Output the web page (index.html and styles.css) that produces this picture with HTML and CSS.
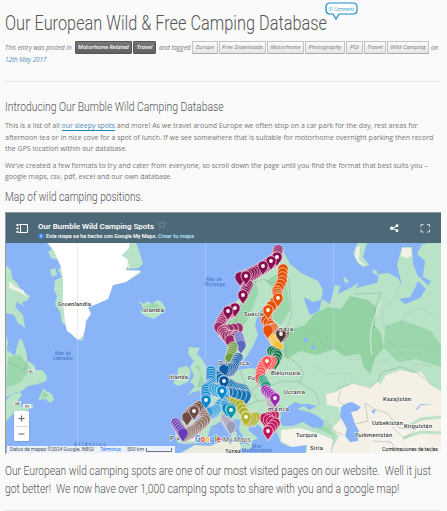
FILE: index.html
```
<!DOCTYPE html>
<html lang="en">
<head>
<meta charset="utf-8">
<title>Our European Wild &amp; Free Camping Database</title>
<link rel="stylesheet" href="styles.css">
</head>
<body>
<article class="entry">
  <header class="entry-header">
    <h1 class="title"><span>Our European Wild &amp; Free Camping Database</span></h1>
    <a class="comments"><svg width="33" height="20" viewBox="0 0 33 20"><path d="M5 1H28Q32 1 32 5V8Q32 12 28 12H14L11 17L8 12H5Q1 12 1 8V5Q1 1 5 1Z" fill="#fff" stroke="#138bc8" stroke-width="1.2"/><text x="4" y="8.6" textLength="25" lengthAdjust="spacingAndGlyphs">51 Comments</text></svg></a>
    <div class="meta">
      <span class="words posted">This entry was posted in</span>
      <a class="tag dark w57">Motorhome Related</a><a class="tag dark w23">Travel</a>
      <span class="words tagged">and tagged</span>
      <a class="tag w26">Europe</a><a class="tag w47">Free Downloads</a><a class="tag w37">Motorhome</a><a class="tag w40">Photography</a><a class="tag w17">POI</a><a class="tag w22">Travel</a><a class="tag w42">Wild Camping</a>
      <span class="words on">on</span>
    </div>
    <div class="date">12th May 2017</div>
  </header>
  <h2 class="sub intro"><span>Introducing Our Bumble Wild Camping Database</span></h2>
  <p class="copy">
    <span class="l1">This is a list of all <a>our sleepy spots</a> and more! As we travel around Europe we often stop on a car park for the day, rest areas for</span>
    <span class="l2">afternoon tea or in nice cove for a spot of lunch. If we see somewhere that is suitable for motorhome overnight parking then record</span>
    <span class="l3">the GPS location within our database.</span>
  </p>
  <p class="copy">
    <span class="l4">We’ve created a few formats to try and cater from everyone, so scroll down the page until you find the format that best suits you –</span>
    <span class="l5">google maps, csv, pdf, excel and our own database.</span>
  </p>
  <h2 class="sub maphead"><span>Map of wild camping positions.</span></h2>
  <svg class="map" viewBox="5 212 436 242" width="436" height="242">
    <defs><clipPath id="frame"><rect x="6" y="243" width="435" height="210"/></clipPath></defs>
    <g clip-path="url(#frame)">
      <rect x="5" y="243" width="436" height="211" fill="#8ab4f8"/>
      <g class="land">
        <path d="M6 265L11 270L12 278L17 283L21 290L30 296L27 301L22 302L24 306L17 302L15 307L23 315L25 328L18 323L14 315L6 313Z"/>
        <path d="M6 335L8 342L7 350L15 356L17 346L20 338L23 342L26 352L28 361L34 365L36 370L42 370L47 376L46 381L38 384L28 386L22 391L14 393L6 397Z"/>
        <path d="M45 383L43 388L46 391L52 394L54 400L50 403L46 399L38 400L41 394ZM6 400L12 394L20 392L22 395L17 401L23 408L32 404L34 407L23 412L14 413L6 421Z"/>
        <path d="M47 243L52 249L48 252L51 258L58 260L61 267L58 270L62 277L55 280L54 290L57 296L55 304L60 312L62 323L66 325L64 243ZM50 270L55 268L57 275L52 277ZM67 330L75 338L82 341L84 336L82 329Z"/>
        <path d="M131 243L126 251L122 253L127 261L123 268L130 269L138 268L143 264L139 250L136 243ZM95 302L104 294L113 285L126 282L141 273L139 270L125 272L110 288L97 299Z"/>
        <path d="M138 301L144 304L147 301L152 304L157 300L162 302L166 309L160 315L154 319L145 316L140 312L144 308Z"/>
        <path d="M189 347L200 348L197 354L202 359L207 368L211 377L210 384L204 390L193 392L187 396L195 386L190 382L194 376L190 367L194 361L188 354ZM178 368L187 366L191 371L188 382L178 386L173 383L177 377Z"/>
        <path d="M219 337L215 328L221 312L239 299L244 286L257 268L273 253L282 249L290 264L303 274L318 281L323 290L321 300L313 302L304 297L306 305L310 315L319 311L322 299L330 304L335 285L340 286L338 294L352 287L359 282L356 288L377 283L379 274L388 273L398 278L402 286L397 265L402 247L412 247L413 264L418 276L428 285L426 289L418 281L416 286L410 297L399 299L405 304L420 298L431 281L423 277L425 261L417 254L422 244H441V454H350L305 454L307 444L299 444L290 447L281 443L275 428L266 436L260 426L250 421L244 415L239 420L230 418L220 422L211 427L207 437L199 443L186 444L178 443L175 436L178 421L196 420L203 420L203 411L194 403L205 399L213 395L220 390L226 381L230 369L235 363L238 370L249 368L259 369L264 365L269 357L272 342L286 333L281 333L267 337L263 328L264 315L268 306L264 306L258 315L255 325L258 335L253 346L247 356L241 364L238 360L235 343L228 345Z"/>
        <path d="M240 421L246 423L249 431L258 438L252 441L252 447L245 440L239 430ZM240 444L252 445L248 451L240 448ZM232 431L237 432L236 440L231 440ZM345 277A3 3 0 1 0 349 282Z"/>
        <path d="M358 243L353 253L357 262L363 267L369 265L363 257L367 243ZM372 269L377 271L378 276L373 273ZM427 243L426 250L429 262L438 278L441 274V243Z"/>
        <path d="M179 454L195 445L211 446L222 441L239 442L241 447L239 454Z" fill="#e8eddc"/>
      </g>
      <g fill="#92d2a3">
        <path d="M314 314L328 307L341 309L350 296L368 300L376 307L374 325L380 332L384 348L375 358L370 374L364 367L360 354L344 356L334 349L317 355L300 351L287 359L279 347L287 330L304 326Z"/>
        <path d="M266 281L279 273L286 279L290 310L281 325L272 318L278 294ZM248 292L256 280L258 294L247 321L236 335L226 340L225 323L239 306ZM385 326L402 320L431 331L441 345V367L416 359L398 362L384 348Z" opacity=".75"/>
        <path d="M8 357L20 355L31 369L21 382L6 388ZM43 391L49 395L42 399ZM195 366L201 373L197 388L205 386L199 366ZM217 411L234 402L249 407L239 414L222 419ZM270 402L288 408L281 415L268 412ZM309 420L329 429L338 437L330 434L316 428ZM403 422L424 416L441 419L416 429L404 431ZM143 307L156 303L163 309L153 313Z" opacity=".75"/>
      </g>
      <path d="M340 389L353 383L371 387L378 381L380 385L386 375L401 370L414 373L421 372L432 386L441 391V454H329L338 438L330 430L341 419L339 407L327 405L326 394L336 392Z" fill="#f4f0e6"/>
      <path d="M281 430L299 428L320 434L334 440L331 454H307L307 445L292 447L281 441ZM371 419L388 417L400 428L423 428L425 444L409 454H369Z" fill="#f6f3ec"/>
      <path d="M405 428L421 419L441 417M403 438L421 432L441 433M325 424L338 437" fill="none" stroke="#a9dcb8" stroke-width="3" opacity=".75"/>
      <path d="M297 409L304 406L309 410L317 406L309 404L300 404L295 402L282 411L280 421L283 426L293 426L303 422L313 428L323 427L324 421L316 415L309 412ZM347 403L352 402L361 407L357 411L351 412L355 424L359 431L358 441L350 442L345 436L347 429L340 416L341 407ZM416 409L421 404L433 404L421 405L417 410ZM371 411L376 409L374 414ZM312 345L315 346L316 350L311 348ZM304 338H308L307 343L304 342Z" fill="#8ab4f8"/>
      <g fill="#f4f0e6"><path d="M402 248L411 248L412 256L406 258L401 256ZM356 247L360 246L359 260L366 266L360 264L355 257ZM9 281L16 287L23 290L27 297L19 292L9 288ZM180 431L188 426L201 429L195 441L182 441ZM123 259L126 260L130 267L124 267Z"/></g>
      <path d="M48 243L54 251L57 258L61 267L63 280L63 303L65 322L67 331L73 335L78 340L83 336L85 330L86 321L91 314L88 307L97 304L108 299L113 285L126 282L141 271L126 270L128 260L122 255L129 248L130 243Z" fill="#fff"/>
      <g class="borders">
        <path d="M249 282L256 282L264 279L270 283L277 282L283 275L289 279L290 298L292 315L286 330M250 283L247 297L239 309L235 325L236 340M282 335L287 347L285 356L279 362L267 366M285 356L296 362L304 373L300 382L281 381L273 385L258 386M255 369L258 386L251 391L244 382L240 370M251 391L258 401L271 399L282 411M240 391L230 398L239 407L250 404L258 401M258 413L270 417L279 416M211 426L223 427M182 425L185 442M297 380L317 394L319 405M325 420L335 431L343 435M337 389L353 383L370 388L378 381L382 372L401 367L417 373L432 385M355 424L368 421L365 403L374 409L387 413L399 428L416 429L405 439L392 427M341 390L338 401L346 407M334 437L331 454M372 441L391 442L401 454M355 294L381 293L376 305L374 328M30 354L24 370L8 362"/>
        <path d="M295 325L317 331L322 344L340 347L352 360L370 358L381 363L401 352L414 364L434 366M311 362L325 374L350 373L359 382M400 286L394 301L382 309L383 325L398 332L405 314L422 308L441 319M381 335L396 348L417 344L441 350" opacity=".4"/>
      </g>
      <path d="M382 302Q377 309 372 325Q369 339 372 355" stroke="#dceadd" stroke-width="1.4" fill="none" opacity=".7"/>
      <path d="M333.500 243V380M205.500 243V405M77.500 243V454" stroke="#c3d8fb" stroke-width=".7" opacity=".6"/>
      <g id="pins"></g>
      <g class="labels">
        <text x="58" y="306" textLength="33">Groenlandia</text><text x="142" y="312" textLength="22">Islandia</text><text x="244" y="315.500" textLength="19">Suecia</text><text x="279" y="331" textLength="14">ndia</text><text x="219" y="364.500" textLength="8">Di</text><text x="240" y="364.500" textLength="9">rca</text><text x="169" y="379" textLength="19">Irlanda</text><text x="248" y="380" textLength="7">Po</text><text x="271" y="375" textLength="29">Bielorrusia</text><text x="284" y="394" textLength="21">Ucrania</text><text x="268" y="411" textLength="21">manía</text><text x="170" y="440" textLength="10">Po</text><text x="296" y="437" textLength="21">Turquía</text><text x="310" y="450" textLength="13">Siria</text><text x="225" y="452.500" textLength="16">Túnez</text><text x="383" y="401" textLength="28">Kazajistán</text><text x="372" y="424.500" textLength="31">Uzbekistán</text><text x="404" y="428" textLength="28">Kirguistán</text><text x="355" y="437" textLength="37">Turkmenistán</text>
        <g class="sea"><text x="206" y="281" textLength="16">Mar de</text><text x="205" y="286" textLength="20">Noruega</text><text x="55" y="355" textLength="16">Mar de</text><text x="53" y="360" textLength="20">Labrador</text><text x="252" y="448" textLength="10">Mar</text><text x="242" y="452.300" textLength="30">Mediterráneo</text><text x="74" y="445.700" textLength="32">Atlántico</text></g>
        <g class="prov"><rect x="28" y="369" width="6" height="4"/><text x="29" y="372.500">NL</text><rect x="14" y="401" width="7" height="4"/><text x="15" y="404.500">NB</text><rect x="23" y="404" width="8" height="4"/><text x="25" y="407.500">PE</text></g>
      </g>
      <g class="google"><text x="195" y="441.500" textLength="26" lengthAdjust="spacingAndGlyphs"><tspan fill="#4285f4">G</tspan><tspan fill="#ea4335">o</tspan><tspan fill="#fbbc05">o</tspan><tspan fill="#4285f4">g</tspan><tspan fill="#34a853">l</tspan><tspan fill="#ea4335">e</tspan></text><text x="223" y="441.500" textLength="28" lengthAdjust="spacingAndGlyphs" fill="#757575" font-size="7.500" font-weight="500">My Maps</text></g>
      <rect x="7" y="446" width="168" height="7.500" fill="#f2f5fb" opacity=".92"/><rect x="380" y="446" width="61" height="7" fill="#f5f5f5" opacity=".55"/>
      <g class="legal"><text x="10" y="451.300" textLength="84">Datos de mapas ©2024 Google, INEGI</text><text x="100" y="451.300" textLength="21" fill="#1a73e8">Términos</text><text x="127" y="451.300" textLength="17">500 km</text><text x="382" y="451.300" textLength="56" fill="#111">Combinaciones de teclas</text><path d="M146.500 448V451.500H171.500V448" fill="none" stroke="#555" stroke-width=".8"/></g>
      <g><rect x="13.500" y="411" width="16" height="31" rx="1" fill="#41608a" opacity=".25"/><rect x="14" y="411" width="15" height="30" rx="1" fill="#fff"/><path d="M15 426.500H28" stroke="#ccc" stroke-width=".8"/><path d="M18.500 418.500H24.500M21.500 415.500V421.500M18.500 434H24.500" stroke="#666" stroke-width="1.1"/></g>
    </g>
    <rect x="5" y="212" width="436" height="31" fill="#4d6876"/>
    <path d="M5 212.500H441M5.500 212V454" stroke="#969696" fill="none"/>
    <g stroke="#fff" fill="none"><path d="M19 224.500H27.500V232.500H19M20.500 224V233"/><path d="M16.500 224H18.500V226H16.500ZM16.500 227.500H18.500V229.500H16.500ZM16.500 231H18.500V233H16.500Z" fill="#fff" stroke="none"/><path d="M398 226L392 228.200L398 231" /></g>
    <g fill="#fff"><rect x="390" y="226.500" width="3.400" height="3.400" rx="1.500"/><circle cx="397" cy="225.600" r="1.400"/><circle cx="397" cy="230.700" r="1.400"/></g>
    <path d="M421 227V224.500H423.500M427 224.500H429.500V227M429.500 229.500V232H427M423.500 232H421V229.500" fill="none" stroke="#d8dfe2"/>
    <g class="map-title"><text x="38" y="229" textLength="116" lengthAdjust="spacingAndGlyphs">Our Bumble Wild Camping Spots</text><text class="tiny" x="46" y="238" textLength="111" lengthAdjust="spacingAndGlyphs">Este mapa se ha hecho con Google My Maps.</text><text class="tiny link" x="158" y="238" textLength="36" lengthAdjust="spacingAndGlyphs">Crear tu mapa</text></g>
    <path d="M162 221L163 223.700H166L163.600 225.400L164.500 228L162 226.400L159.500 228L160.400 225.400L158 223.700H161Z" fill="none" stroke="#7b919c" stroke-width=".7"/><circle cx="41" cy="236" r="2.700" fill="#4285f4"/><path d="M41 234.500V237.500" stroke="#fff" stroke-width=".8"/>
  </svg>
  <div class="closing"><span class="c1">Our European wild camping spots are one of our most visited pages on our website.&nbsp; Well it just</span><span class="c2">got better!&nbsp; We now have over 1,000 camping spots to share with you and a google map!</span></div>
</article>
<script src="pins.js"></script>
</body>
</html>
```
FILE: styles.css
```
* { box-sizing: border-box; }
body { margin: 0; background: #fafafa; color: #777; font-family: "Open Sans", sans-serif; overflow: hidden; }
.entry { height: 511px; width: 441px; padding-left: 5px; }
.entry-header { position: relative; height: 82px; width: 435px; border-bottom: 1px solid #e5e5e5; }
h1, h2, p { margin: 0; font-weight: 300; }
.title { height: 40px; padding-top: 9px; font: 300 20.5px/28px "Roboto", sans-serif; color: #555; white-space: nowrap; }
.title span, .sub span, .closing span, .copy > span { display: block; width: max-content; transform-origin: left center; white-space: nowrap; }
.title span { transform: scaleX(.796); }
.comments { position: absolute; left: 320px; top: 2px; }
.comments text { font: 5px "Roboto", sans-serif; fill: #3fa4d2; }
.meta { display: flex; height: 14px; align-items: center; font-size: 6px; font-style: italic; white-space: nowrap; }
.words { flex: none; font-size: 6.300px; }
.posted { width: 70px; } .tagged { width: 35px; padding-left: 2px; } .on { padding-left: 1px; }
.tag { flex: none; height: 13px; line-height: 10px; margin-right: 1px; border: 1px solid #c2c2c2; border-bottom: 1.500px solid #aaa; border-radius: 1px; text-align: center; background: linear-gradient(#fcfcfc, #e5e5e5); font-size: 5.800px; }
.dark { color: #fff; background: linear-gradient(#777, #606060); border-color: #555; font-weight: 600; font-size: 5.600px; }
.w57 { width: 57px; } .w23 { width: 23px; } .w26 { width: 26px; } .w47 { width: 47px; } .w37 { width: 37px; } .w40 { width: 40px; } .w17 { width: 17px; } .w22 { width: 22px; } .w42 { width: 42px; }
.date { font-size: 6.300px; font-style: italic; line-height: 12px; color: #528bbd; }
.sub { font: 300 12px/18px "Roboto", sans-serif; color: #555; }
.intro { margin-top: 16px; height: 22px; }
.intro span { transform: scaleX(.862); }
.maphead { padding-top: 0; height: 24px; }
.maphead span { transform: scaleX(.843); }
.copy { font-size: 7px; line-height: 11.600px; margin-bottom: 5px; font-weight: 400; }
.copy a { color: #528bbd; border-bottom: 1px solid #138bc8; }
.map { display: block; font-family: "Roboto", sans-serif; }
.land { fill: #b9e3c6; }
.borders { fill: none; stroke: #829b91; stroke-width: .6; opacity: .65; }
.labels { font-size: 6px; font-weight: 500; fill: #333; stroke: #fff; stroke-width: 1px; paint-order: stroke; }
.labels .sea { font-size: 5px; fill: #4d7fc9; stroke: none; }
.labels .prov { font-size: 3.500px; stroke: none; fill: #666; }
.prov rect { fill: #eee; }
.google { font-size: 9px; font-weight: 700; stroke: #fff; stroke-width: 1px; paint-order: stroke; }
.legal { font-size: 5.200px; fill: #555; }
.map-title { font-size: 8px; font-weight: 600; fill: #fff; }
.map-title .tiny { font-size: 5.500px; }
.map-title .link { fill: #aee3f8; }
.closing { height: 57px; padding-top: 8px; border-bottom: 1px solid #e5e5e5; font: 300 12.500px/18px "Roboto", sans-serif; width: 435px; color: #555; }
.c1, .c2 { transform: scaleX(.822); }
```
FILE: pins.js
```
const routes = [
  ['#880e4f', 22, [[278,251],[277,258],[271,262],[263,267],[255,272],[246,276],[240,278]]],
  ['#880e4f', 6, [[248,286],[243,296]]],
  ['#a52767', 11, [[235,309],[228,312],[222,321],[219,328]]],
  ['#9c2865', 15, [[238,329],[222,331],[227,337],[237,336],[230,341]]],
  ['#e65100', 22, [[283,270],[282,282],[277,292],[278,299],[268,311],[266,321],[273,329],[268,331]]],
  ['#4e342e', 4, [[284,334],[280,335]]],
  ['#fbc02d', 5, [[274,340],[278,347]]],
  ['#087747', 6, [[272,352],[278,355],[275,362]]],
  ['#ff5252', 9, [[272,362],[265,363],[261,371],[260,379]]],
  ['#26a47a', 4, [[263,381],[266,387]]],
  ['#9c27b0', 6, [[266,391],[275,399]]],
  ['#aaaaaa', 5, [[271,405],[274,411]]],
  ['#c2185b', 10, [[274,416],[265,419],[275,424],[268,432]]],
  ['#5c6bc0', 5, [[239,338],[241,346]]],
  ['#689f38', 6, [[233,348],[230,359]]],
  ['#0d5ba5', 11, [[238,359],[233,368],[224,370]]],
  ['#1274b4', 22, [[212,373],[224,382],[236,388],[244,390],[247,397],[228,393]]],
  ['#0288d1', 16, [[211,372],[211,384],[206,390],[206,402]]],
  ['#299fdd', 17, [[214,389],[224,391],[225,400],[216,410],[208,413]]],
  ['#8d7368', 15, [[200,409],[206,420],[194,430],[185,434]]],
  ['#6d4c41', 7, [[199,407],[192,412],[187,418]]],
  ['#673ab7', 6, [[176,424],[183,434]]],
  ['#9b9db6', 5, [[226,420],[231,427]]],
  ['#afb42b', 13, [[230,403],[240,406],[246,417],[255,418],[246,420]]],
  ['#0288d1', 4, [[225,405],[227,409]]],
  ['#0097a7', 2, [[231,409],[231,411]]]
];
const landmarks = [['#880e4f',277,258],['#880e4f',271,262],['#880e4f',263,267],['#880e4f',246,277],['#880e4f',243,296],['#880e4f',235,309],['#880e4f',228,312],['#e65100',278,299],['#e65100',268,311],['#4e342e',281,335],['#ff5252',267,362],['#9c27b0',275,399],['#c2185b',268,432],['#01579b',224,382],['#0288d1',222,392],['#0288d1',206,401],['#6d4c41',194,412],['#afb42b',246,418],['#0097a7',231,411]];
const layer = document.getElementById('pins');
function pin(color, x, y, dot) {
  return `<g transform="translate(${x.toFixed(2)} ${y.toFixed(2)})"><path d="M0 9C-1 5-5.200 3-5.200-1A5.200 5.200 0 0 1 5.200-1C5.200 3 1 5 0 9Z" fill="${color}" stroke="#f3e7ed" stroke-width=".65"/>${dot ? '<circle r="1.900" cy="-1" fill="#fff"/>' : ''}</g>`;
}
let marks = '';
for (const [color, count, points] of routes) {
  for (let i = 0; i < count; i++) {
    const t = i / (count - 1) * (points.length - 1);
    const k = Math.min(Math.floor(t), points.length - 2);
    const f = t - k;
    marks += pin(color, points[k][0] + (points[k+1][0] - points[k][0]) * f, points[k][1] + (points[k+1][1] - points[k][1]) * f, false);
  }
}
for (const [color, x, y] of landmarks) marks += pin(color, x, y, true);
layer.innerHTML = marks;
```
